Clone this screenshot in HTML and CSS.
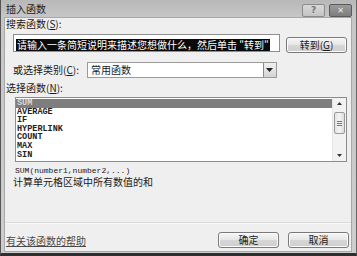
FILE: index.html
```html
<!DOCTYPE html>
<html lang="zh">
<head>
<meta charset="utf-8">
<title>插入函数</title>
<link rel="stylesheet" href="styles.css">
</head>
<body>
<div class="window">
  <div class="titlebar">
    <span class="title">插入函数</span>
    <div class="caption-btns">
      <span class="cbtn help">?</span>
      <span class="cbtn close">✕</span>
    </div>
  </div>
  <div class="client">
    <div class="label search-label">搜索函数(<u>S</u>):</div>
    <div class="search-row">
      <div class="input"><span class="sel">请输入一条简短说明来描述您想做什么，然后单击 "转到"</span></div>
      <button class="btn go">转到(<u>G</u>)</button>
    </div>
    <div class="cat-row">
      <span class="label">或选择类别(<u>C</u>):</span>
      <div class="select"><span class="val">常用函数</span><span class="arrow"><svg width="7" height="4" viewBox="0 0 7 4"><path d="M0 0h7L3.5 4z" fill="#222"/></svg></span></div>
    </div>
    <div class="label fn-label">选择函数(<u>N</u>):</div>
    <div class="listbox">
      <ul class="items">
        <li class="selected">SUM</li>
        <li>AVERAGE</li>
        <li>IF</li>
        <li>HYPERLINK</li>
        <li>COUNT</li>
        <li>MAX</li>
        <li>SIN</li>
      </ul>
      <div class="scrollbar">
        <span class="sarrow"><svg width="5" height="3" viewBox="0 0 5 3"><path d="M0 3h5L2.5 0z" fill="#333"/></svg></span>
        <div class="track"><div class="thumb"><i></i><i></i><i></i></div></div>
        <span class="sarrow"><svg width="5" height="3" viewBox="0 0 5 3"><path d="M0 0h5L2.5 3z" fill="#333"/></svg></span>
      </div>
    </div>
    <div class="syntax">SUM(number1,number2,...)</div>
    <div class="desc">计算单元格区域中所有数值的和</div>
    <div class="spacer"></div>
    <div class="sep"></div>
    <div class="footer">
      <a class="help-link" href="#">有关该函数的帮助</a>
      <div class="btns">
        <button class="btn">确定</button>
        <button class="btn">取消</button>
      </div>
    </div>
  </div>
</div>
</body>
</html>
```

FILE: styles.css
```css
* { box-sizing: border-box; }
html, body { margin: 0; padding: 0; }
body {
  width: 357px;
  height: 256px;
  overflow: hidden;
  background: #c8c8c8;
  font-family: "Noto Sans CJK SC", "Liberation Sans", sans-serif;
  font-size: 10px;
  color: #1a1a1a;
}
.window {
  width: 357px;
  height: 256px;
  display: flex;
  flex-direction: column;
  background: linear-gradient(#b8b8b8, #c6c6c6 17px, #cdcdcd);
  border-left: 1px solid #555;
  border-right: 1px solid #666;
  border-bottom: 3px solid #2e2e2e;
  padding: 0 4px 1px 3px;
}
.titlebar {
  height: 17px;
  flex: none;
  display: flex;
  align-items: flex-start;
  justify-content: space-between;
}
.title {
  margin: 3px 0 0 2px;
  line-height: 12px;
  color: #222;
}
.caption-btns {
  display: flex;
  gap: 4px;
  margin: 4px 0 0 0;
}
.cbtn {
  width: 23px;
  height: 13px;
  border: 1px solid #8a8a8a;
  border-radius: 2px;
  display: flex;
  align-items: center;
  justify-content: center;
  font-family: "DejaVu Sans", sans-serif;
  font-size: 9px;
  line-height: 1;
}
.help {
  background: linear-gradient(#d8d8d8, #c4c4c4);
  color: #777;
  font-weight: bold;
}
.close {
  background: linear-gradient(#9a9a9a, #7e7e7e);
  color: #e8e8e8;
  font-weight: bold;
  font-size: 8px;
  border-color: #5a5a5a;
}
.client {
  flex: 1;
  display: flex;
  flex-direction: column;
  background: #efefef;
  border: 1px solid #a8a8a8;
  padding: 0 2px 0 1px;
}
.label {
  line-height: 12px;
  white-space: nowrap;
}
.label u, .btn u { text-decoration: underline; }
.search-label { margin-left: 0; }
.search-row {
  display: flex;
  align-items: flex-start;
  margin-top: 4px;
}
.input {
  margin-left: 7px;
  width: 267px;
  height: 18px;
  background: #fff;
  border: 1px solid #8e8e8e;
  padding: 2px 0 0 2px;
  overflow: hidden;
  white-space: nowrap;
}
.sel {
  display: inline-block;
  background: #0a0a0a;
  color: #fff;
  line-height: 12px;
  padding: 0 1px;
}
.btn {
  font-family: "Noto Sans CJK SC", "Liberation Sans", sans-serif;
  font-size: 10px;
  color: #1a1a1a;
  width: 61px;
  height: 16px;
  padding: 0;
  line-height: 12px;
  border: 1px solid #7a7a7a;
  border-radius: 3px;
  background: linear-gradient(#f6f6f6, #e6e6e6 50%, #d6d6d6 51%, #cfcfcf);
  box-shadow: inset 0 0 0 1px #fbfbfb;
}
.go { margin: 3px 0 0 6px; }
.cat-row {
  display: flex;
  align-items: center;
  margin-top: 9px;
  padding-left: 7px;
}
.select {
  margin-left: 8px;
  width: 190px;
  height: 16px;
  background: #fff;
  border: 1px solid #9a9a9a;
  display: flex;
  align-items: center;
  justify-content: space-between;
  padding-left: 3px;
}
.val { line-height: 12px; }
.arrow {
  width: 13px;
  height: 14px;
  border-left: 1px solid #8a8a8a;
  background: linear-gradient(#f0f0f0, #d4d4d4);
  display: flex;
  align-items: center;
  justify-content: center;
}
.fn-label { margin-top: 4px; }
.listbox {
  margin: 3px 0 0 9px;
  width: 332px;
  height: 65px;
  background: #fff;
  border: 1px solid #8c8c8c;
  display: flex;
}
.items {
  flex: 1;
  list-style: none;
  margin: 0;
  padding: 1px 0 0 0;
  font-family: "Liberation Mono", monospace;
  font-weight: bold;
  font-size: 8.5px;
  line-height: 8.6px;
  color: #222;
}
.items li { padding-left: 1px; height: 8.6px; }
.items li.selected {
  background: #7e7e7e;
  color: #dadada;
}
.scrollbar {
  width: 14px;
  display: flex;
  flex-direction: column;
  background: #f2f2f2;
  border-left: 1px solid #e6e6e6;
}
.sarrow {
  height: 11px;
  display: flex;
  align-items: center;
  justify-content: center;
}
.track {
  flex: 1;
  padding: 3px 1px 0 1px;
}
.thumb {
  height: 22px;
  border: 1px solid #9a9a9a;
  border-radius: 2px;
  background: linear-gradient(90deg, #e4e4e4, #f4f4f4 50%, #dcdcdc);
  display: flex;
  flex-direction: column;
  align-items: center;
  justify-content: center;
  gap: 1px;
}
.thumb i {
  display: block;
  width: 5px;
  height: 1px;
  background: #777;
}
.syntax {
  margin: 4px 0 0 9px;
  font-family: "Liberation Mono", monospace;
  font-size: 8px;
  line-height: 10px;
  color: #222;
}
.desc {
  margin: 0 0 0 7px;
  line-height: 12px;
}
.spacer { flex: 1; }
.sep {
  height: 2px;
  border-top: 1px solid #dadada;
  border-bottom: 1px solid #f8f8f8;
  margin-right: -2px;
}
.footer {
  display: flex;
  align-items: center;
  justify-content: space-between;
  margin: 8px 0 3px 0;
}
.help-link {
  color: #4a4a4a;
  text-decoration: underline;
  line-height: 12px;
  margin-top: 1px;
}
.btns {
  display: flex;
  gap: 9px;
}
```
